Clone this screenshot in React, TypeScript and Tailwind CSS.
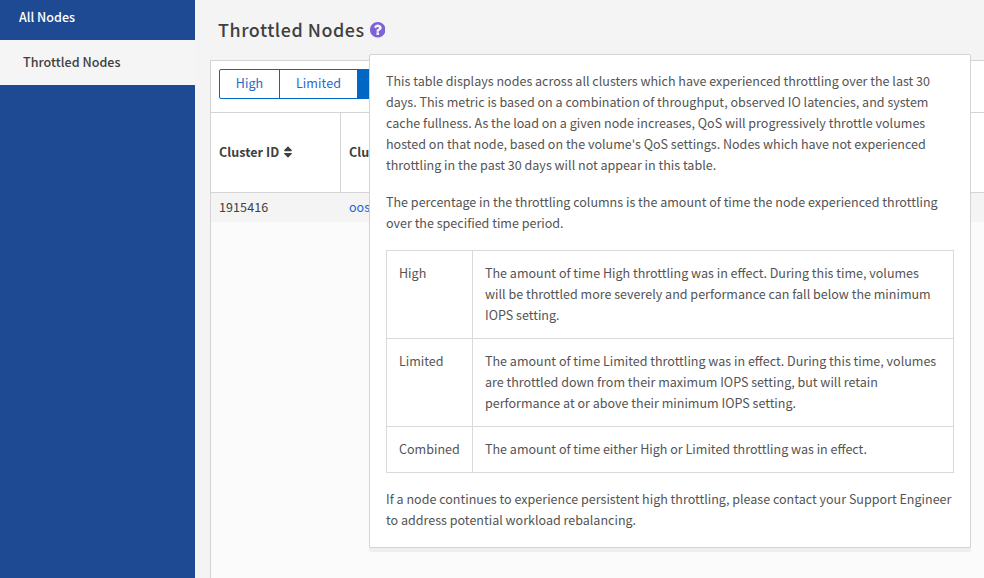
import { FaSort } from "react-icons/fa";

const throttlingTypes = [
  {
    name: "High",
    lines: [
      "The amount of time High throttling was in effect. During this time, volumes",
      "will be throttled more severely and performance can fall below the minimum",
      "IOPS setting.",
    ],
  },
  {
    name: "Limited",
    lines: [
      "The amount of time Limited throttling was in effect. During this time, volumes",
      "are throttled down from their maximum IOPS setting, but will retain",
      "performance at or above their minimum IOPS setting.",
    ],
  },
  {
    name: "Combined",
    lines: ["The amount of time either High or Limited throttling was in effect."],
  },
];

function Lines({ lines }: { lines: string[] }) {
  return (
    <>
      {lines.map((line) => (
        <span key={line} className="block whitespace-nowrap">
          {line}
        </span>
      ))}
    </>
  );
}

function HelpIcon() {
  return (
    <svg width="15.5" height="15.5" viewBox="0 0 1536 1536" className="ml-[5px] mt-[2px]" fill="#8061d6">
      <path d="M896 1248v-192q0-14-9-23t-23-9h-192q-14 0-23 9t-9 23v192q0 14 9 23t23 9h192q14 0 23-9t9-23zm256-672q0-88-55.5-163t-138.5-116-170-41q-243 0-371 213-15 24 8 42l132 100q7 6 19 6 16 0 25-12 53-68 86-92 34-24 86-24 48 0 85.5 26t37.5 59q0 38-20 61t-68 45q-63 28-115.5 86.5t-52.5 125.5v36q0 14 9 23t23 9h192q14 0 23-9t9-23q0-19 21.5-49.5t54.5-49.5q32-18 49-28.5t46-35 44.5-48 28-60.5 12.5-81zm384 192q0 209-103 385.5t-279.5 279.5-385.5 103-385.5-103-279.5-279.5-103-385.5 103-385.5 279.5-279.5 385.5-103 385.5 103 279.5 279.5 103 385.5z" />
    </svg>
  );
}

function Sidebar() {
  return (
    <nav className="flex w-[195px] shrink-0 flex-col bg-[#1e4a93]">
      <a className="flex h-10 items-center pb-[6px] pl-[19px] font-medium text-white">All Nodes</a>
      <a className="flex h-[45px] items-center bg-[#f5f5f5] pb-px pl-[23px] font-medium tracking-[0.04px] text-[#404040]">
        Throttled Nodes
      </a>
    </nav>
  );
}

function HelpPopover() {
  return (
    <div className="absolute left-[369px] top-[54px] h-[494px] w-[602px] rounded-[2px] border border-[#d4d4d4] bg-white px-4 pt-[15px] leading-[21px] text-[#545454] shadow-[0_4px_0_0_rgba(0,0,0,0.05)]">
      <p>
        <Lines
          lines={[
            "This table displays nodes across all clusters which have experienced throttling over the last 30",
            "days. This metric is based on a combination of throughput, observed IO latencies, and system",
            "cache fullness. As the load on a given node increases, QoS will progressively throttle volumes",
            "hosted on that node, based on the volume's QoS settings. Nodes which have not experienced",
            "throttling in the past 30 days will not appear in this table.",
          ]}
        />
      </p>
      <p className="mt-4">
        <Lines
          lines={[
            "The percentage in the throttling columns is the amount of time the node experienced throttling",
            "over the specified time period.",
          ]}
        />
      </p>
      <table className="mt-[17px] w-[568px] table-fixed border-collapse">
        <tbody>
          {throttlingTypes.map((type) => (
            <tr key={type.name}>
              <td className="w-[86px] border border-[#d9dadd] px-3 pb-[13px] pt-[11px] align-top">{type.name}</td>
              <td className="border border-[#d9dadd] px-3 pb-[13px] pt-[11px] align-top">
                <Lines lines={type.lines} />
              </td>
            </tr>
          ))}
        </tbody>
      </table>
      <p className="mt-[15px]">
        <Lines
          lines={[
            "If a node continues to experience persistent high throttling, please contact your Support Engineer",
            "to address potential workload rebalancing.",
          ]}
        />
      </p>
    </div>
  );
}

export default function App() {
  return (
    <div className="relative flex h-[578px] w-[984px] overflow-hidden bg-[#f4f4f4] font-['Noto_Sans_CJK_SC',sans-serif] text-[12.54px] leading-[20px] text-[#404040]">
      <Sidebar />
      <main className="flex min-w-0 flex-1 flex-col pl-[15px]">
        <header className="flex h-[60px] shrink-0 items-center pb-[2px] pl-2">
          <h1 className="text-[17.9px] font-medium tracking-[0.55px]">Throttled Nodes</h1>
          <HelpIcon />
        </header>
        <section className="flex flex-1 flex-col border-l border-t border-[#d4d4d4] bg-[#fbfbfb]">
          <div className="flex h-[51px] shrink-0 bg-white pl-2 pt-2">
            <div className="flex h-[30px] overflow-hidden rounded-[2px] border border-[#0067c5] text-[#2a69c8]">
              <button className="w-[60px] border-r border-[#0067c5] pb-[2px] tracking-[0.1px]">High</button>
              <button className="w-[77px] pb-[2px] tracking-[0.1px]">Limited</button>
              <button className="w-[90px] bg-[#0067c5]" />
            </div>
          </div>
          <div className="flex h-[81px] shrink-0 border-y border-[#d4d4d4] bg-white font-bold">
            <div className="flex w-[130px] items-center border-r border-[#d4d4d4] pb-[2px] pl-2 tracking-[0.04px]">
              Cluster ID
              <FaSort size={14} className="ml-[2px]" />
            </div>
            <div className="flex items-center pb-[2px] pl-2">Clu</div>
          </div>
          <div className="flex h-[29px] shrink-0 items-center bg-[#f4f4f4] pb-[2px]">
            <span className="w-[130px] pl-2 tracking-[0.08px]">1915416</span>
            <a className="pl-2 text-[#1f66cf]">oos</a>
          </div>
        </section>
      </main>
      <HelpPopover />
    </div>
  );
}
